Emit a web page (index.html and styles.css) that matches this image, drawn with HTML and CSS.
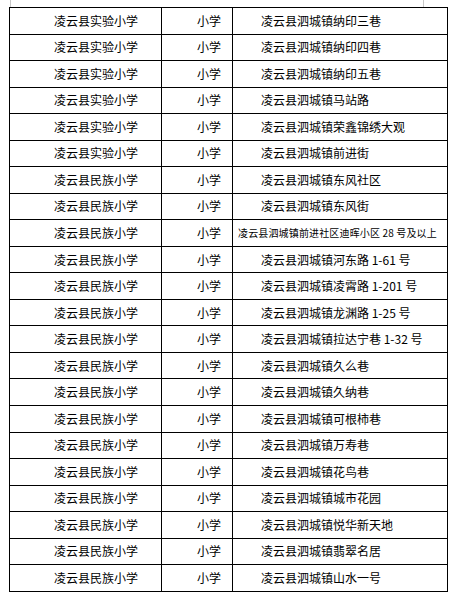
FILE: index.html
```html
<!DOCTYPE html>
<html lang="zh-CN">
<head>
<meta charset="utf-8">
<title>学区划分</title>
<link rel="stylesheet" href="styles.css">
</head>
<body>
<div class="page">
  <span class="mark mark-left"></span>
  <span class="mark mark-right"></span>
  <div class="grid">
    <div class="c1">凌云县实验小学</div><div class="c2">小学</div><div class="c3">凌云县泗城镇纳印三巷</div>
    <div class="c1">凌云县实验小学</div><div class="c2">小学</div><div class="c3">凌云县泗城镇纳印四巷</div>
    <div class="c1">凌云县实验小学</div><div class="c2">小学</div><div class="c3">凌云县泗城镇纳印五巷</div>
    <div class="c1">凌云县实验小学</div><div class="c2">小学</div><div class="c3">凌云县泗城镇马站路</div>
    <div class="c1">凌云县实验小学</div><div class="c2">小学</div><div class="c3">凌云县泗城镇荣鑫锦绣大观</div>
    <div class="c1">凌云县实验小学</div><div class="c2">小学</div><div class="c3">凌云县泗城镇前进街</div>
    <div class="c1">凌云县民族小学</div><div class="c2">小学</div><div class="c3">凌云县泗城镇东风社区</div>
    <div class="c1">凌云县民族小学</div><div class="c2">小学</div><div class="c3">凌云县泗城镇东风街</div>
    <div class="c1">凌云县民族小学</div><div class="c2">小学</div><div class="c3 small">凌云县泗城镇前进社区迪晖小区 28 号及以上</div>
    <div class="c1">凌云县民族小学</div><div class="c2">小学</div><div class="c3">凌云县泗城镇河东路 1-61 号</div>
    <div class="c1">凌云县民族小学</div><div class="c2">小学</div><div class="c3">凌云县泗城镇凌霄路 1-201 号</div>
    <div class="c1">凌云县民族小学</div><div class="c2">小学</div><div class="c3">凌云县泗城镇龙渊路 1-25 号</div>
    <div class="c1">凌云县民族小学</div><div class="c2">小学</div><div class="c3">凌云县泗城镇拉达宁巷 1-32 号</div>
    <div class="c1">凌云县民族小学</div><div class="c2">小学</div><div class="c3">凌云县泗城镇久么巷</div>
    <div class="c1">凌云县民族小学</div><div class="c2">小学</div><div class="c3">凌云县泗城镇久纳巷</div>
    <div class="c1">凌云县民族小学</div><div class="c2">小学</div><div class="c3">凌云县泗城镇可根柿巷</div>
    <div class="c1">凌云县民族小学</div><div class="c2">小学</div><div class="c3">凌云县泗城镇万寿巷</div>
    <div class="c1">凌云县民族小学</div><div class="c2">小学</div><div class="c3">凌云县泗城镇花鸟巷</div>
    <div class="c1">凌云县民族小学</div><div class="c2">小学</div><div class="c3">凌云县泗城镇城市花园</div>
    <div class="c1">凌云县民族小学</div><div class="c2">小学</div><div class="c3">凌云县泗城镇悦华新天地</div>
    <div class="c1">凌云县民族小学</div><div class="c2">小学</div><div class="c3">凌云县泗城镇翡翠名居</div>
    <div class="c1">凌云县民族小学</div><div class="c2">小学</div><div class="c3">凌云县泗城镇山水一号</div>
  </div>
</div>
</body>
</html>
```
FILE: styles.css
```css
html, body {
  margin: 0;
  padding: 0;
  background: #ffffff;
}
.page {
  position: relative;
  width: 462px;
  height: 601px;
  padding: 7px 0 0 9px;
  box-sizing: border-box;
  font-family: "Noto Sans CJK SC", "Noto Sans", sans-serif;
  font-size: 12px;
  color: #000;
}
.mark {
  position: absolute;
  top: 0;
  width: 1px;
  height: 7px;
  background: #c8c8c8;
}
.mark-left { left: 10px; }
.mark-right { left: 423px; }
.grid {
  display: grid;
  grid-template-columns: 152px 71px 215px;
  grid-template-rows: repeat(22, 26.545px);
  border-left: 1px solid #000;
  border-top: 1px solid #000;
  width: 438px;
}
.grid > div {
  border-right: 1px solid #000;
  border-bottom: 1px solid #000;
  display: flex;
  align-items: center;
  white-space: nowrap;
  line-height: 1;
}
.c1 { padding-left: 44px; }
.c2 { padding-left: 35px; }
.c3 { padding-left: 28px; }
.c3.small {
  padding-left: 5px;
  font-size: 10px;
  letter-spacing: 0.15px;
}
```
